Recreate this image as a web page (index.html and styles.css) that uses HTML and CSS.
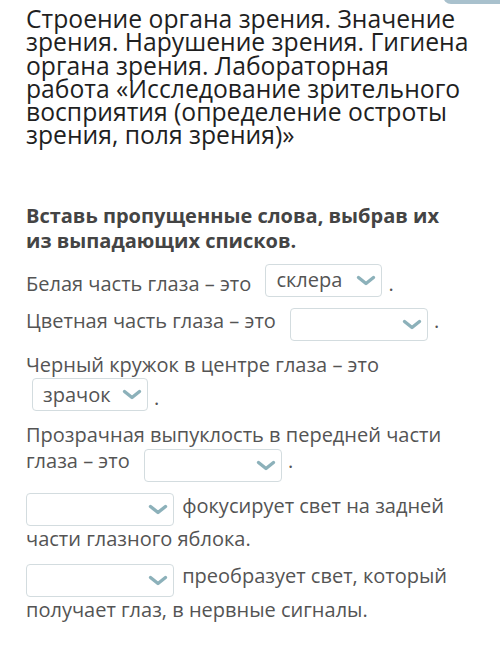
FILE: index.html
```html
<!DOCTYPE html>
<html lang="ru">
<head>
  <meta charset="UTF-8" />
  <meta name="viewport" content="width=device-width, initial-scale=1.0"/>
  <title>Строение органа зрения</title>
  <link rel="stylesheet" href="styles.css">
</head>
<body>
  <!-- edge of the header button -->
  <div class="top-btn"></div>

  <div class="page">
    <h1 class="title">Строение органа зрения. Значение зрения. Нарушение зрения. Гигиена органа зрения. Лабораторная работа «Исследование зрительного восприятия (определение остроты зрения, поля зрения)»</h1>

    <div class="task">Вставь пропущенные слова, выбрав их из выпадающих списков.</div>

    <p class="line">Белая часть глаза – это <span class="select w117"><span class="val">склера</span><svg class="chev" viewBox="0 0 20 11"><path d="M2.5 2.5 L10 8.5 L17.5 2.5" /></svg></span>.</p>

    <p class="line">Цветная часть глаза – это <span class="select w138"><span class="val"></span><svg class="chev" viewBox="0 0 20 11"><path d="M2.5 2.5 L10 8.5 L17.5 2.5" /></svg></span>.</p>

    <p class="line">Черный кружок в центре глаза – это <span class="select wrapped w116"><span class="val">зрачок</span><svg class="chev" viewBox="0 0 20 11"><path d="M2.5 2.5 L10 8.5 L17.5 2.5" /></svg></span>.</p>

    <p class="line">Прозрачная выпуклость в передней части глаза – это <span class="select w138"><span class="val"></span><svg class="chev" viewBox="0 0 20 11"><path d="M2.5 2.5 L10 8.5 L17.5 2.5" /></svg></span>.</p>

    <p class="line"><span class="select first w148"><span class="val"></span><svg class="chev" viewBox="0 0 20 11"><path d="M2.5 2.5 L10 8.5 L17.5 2.5" /></svg></span> фокусирует свет на задней части глазного яблока.</p>

    <p class="line"><span class="select first w148"><span class="val"></span><svg class="chev" viewBox="0 0 20 11"><path d="M2.5 2.5 L10 8.5 L17.5 2.5" /></svg></span> преобразует свет, который получает глаз, в нервные сигналы.</p>
  </div>
</body>
</html>
```

FILE: styles.css
```css
body {
  margin: 0;
  background: #fff;
  font-family: "Open Sans", "Noto Sans", sans-serif;
  overflow: hidden;
}

.top-btn {
  position: absolute;
  top: -30px;
  left: 443px;
  width: 80px;
  height: 34px;
  border-radius: 8px;
  background: #a9c1cd;
}

.page {
  padding: 7px 26px 0 26px;
}

.title {
  margin: 0;
  font-size: 24.7px;
  font-weight: normal;
  line-height: 23.3px;
  color: #1f1f1f;
}

.task {
  margin: 56px 0 11px;
  padding-right: 16px;
  font-size: 20px;
  font-weight: bold;
  line-height: 25px;
  color: #444;
}

.line {
  margin: 0 0 11px;
  font-size: 20px;
  line-height: 26px;
  color: #545454;
}

/* dropdown box */
.select {
  display: inline-flex;
  align-items: center;
  justify-content: space-between;
  box-sizing: border-box;
  height: 33px;
  margin: 0 6px 0 9px;
  padding: 0 5px 0 10px;
  border: 1px solid #d3dcdf;
  border-radius: 4px;
  vertical-align: 3px;
  color: #545454;
}

.select.wrapped {
  margin-left: 6px;
}

.select.first {
  margin-left: 0;
  margin-right: 3px;
}

.w116 { width: 116px; }
.w117 { width: 117px; }
.w138 { width: 138px; }
.w148 { width: 148px; }

.chev {
  width: 20px;
  height: 11px;
  fill: none;
  stroke: #8cb1ba;
  stroke-width: 3.4;
  stroke-linecap: round;
  stroke-linejoin: round;
}
```
